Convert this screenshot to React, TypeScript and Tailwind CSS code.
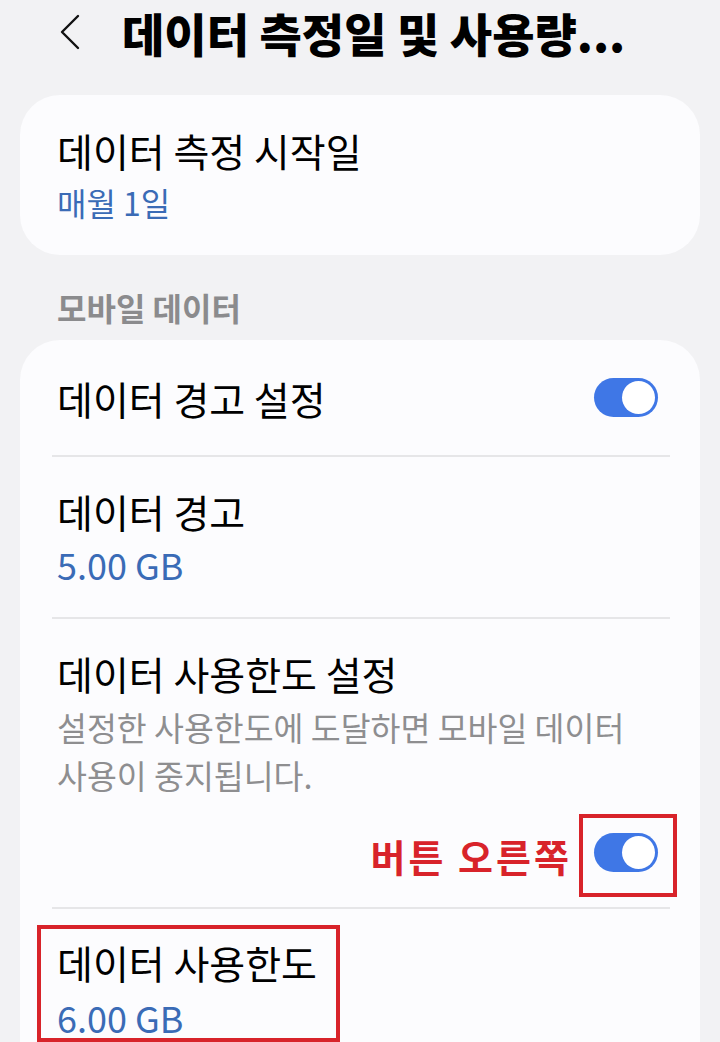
import React from 'react';

const Toggle: React.FC = () => (
    <div className="w-[64px] h-[39px] rounded-full bg-[#3f77e6] flex items-center justify-end pr-[3px]">
        <div className="w-[33px] h-[33px] rounded-full bg-white" />
    </div>
);

const Divider: React.FC = () => <div className="h-[2px] bg-[#e6e6e8] ml-[32px] mr-[30px]" />;

const App: React.FC = () => {
    return (
        <div className="h-[1042px] overflow-hidden bg-[#f2f2f4] font-['Noto_Sans_CJK_KR',sans-serif] text-black">
            {/* header */}
            <div className="flex items-center h-[62px] pt-[2px]">
                <svg className="ml-[58px] w-[26px] h-[38px]" viewBox="0 0 26 38" fill="none">
                    <polyline points="20,3 4,19 20,35" stroke="#111" strokeWidth="2.4" strokeLinecap="round" strokeLinejoin="round" />
                </svg>
                <h1 className="ml-[38px] text-[46px] leading-[58px] font-black tracking-[0px] whitespace-nowrap">
                    데이터 측정일 및 사용량...
                </h1>
            </div>

            {/* card 1 */}
            <div className="mt-[33px] mx-[20px] h-[160px] rounded-[40px] bg-[#fcfcfe] px-[37px] flex flex-col justify-center">
                <div className="text-[39px] leading-[42px]">데이터 측정 시작일</div>
                <div className="mt-[12px] text-[32px] leading-[38px] text-[#3a6bb6]">매월 1일</div>
            </div>

            {/* section label */}
            <div className="h-[85px] flex items-end pb-[18px] px-[57px]">
                <span className="text-[32px] leading-[30px] font-semibold text-[#8b8b8d]">모바일 데이터</span>
            </div>

            {/* card 2 */}
            <div className="mx-[20px] rounded-t-[40px] bg-[#fcfcfe] min-h-[720px]">
                <div className="h-[115px] flex items-center justify-between pl-[37px] pr-[42px]">
                    <span className="text-[39px] leading-[40px]">데이터 경고 설정</span>
                    <Toggle />
                </div>
                <Divider />

                <div className="pl-[37px] pr-[42px] pt-[34px] pb-[33px]">
                    <div className="text-[39px] leading-[40px]">데이터 경고</div>
                    <div className="mt-[13px] text-[36px] leading-[40px] text-[#3a6bb6]">5.00 GB</div>
                </div>
                <Divider />

                <div className="pl-[37px] pr-[30px] pt-[34px] pb-[31px]">
                    <div className="text-[39px] leading-[40px]">데이터 사용한도 설정</div>
                    <p className="mt-[10px] text-[32.5px] leading-[48px] text-[#8e8e90] whitespace-nowrap">
                        설정한 사용한도에 도달하면 모바일 데이터<br />사용이 중지됩니다.
                    </p>
                    <div className="mt-[29px] flex items-center justify-end gap-[22px] pr-[12px]">
                        <span className="text-[38px] leading-[40px] font-bold tracking-[3px] text-[#d8232a] mt-[8px]">버튼 오른쪽</span>
                        <div className="relative">
                            <Toggle />
                            <div className="absolute -left-[15px] -right-[19px] -top-[19px] -bottom-[25px] border-4 border-[#d8232a]" />
                        </div>
                    </div>
                </div>
                <Divider />

                <div className="relative pl-[37px] pr-[42px] pt-[33px] pb-[20px]">
                    <div className="text-[39px] leading-[40px]">데이터 사용한도</div>
                    <div className="mt-[15px] text-[36px] leading-[40px] text-[#3a6bb6]">6.00 GB</div>
                    <div className="absolute left-[17px] top-[16px] w-[303px] h-[117px] border-4 border-[#d8232a]" />
                </div>
            </div>
        </div>
    );
};

export default App;
